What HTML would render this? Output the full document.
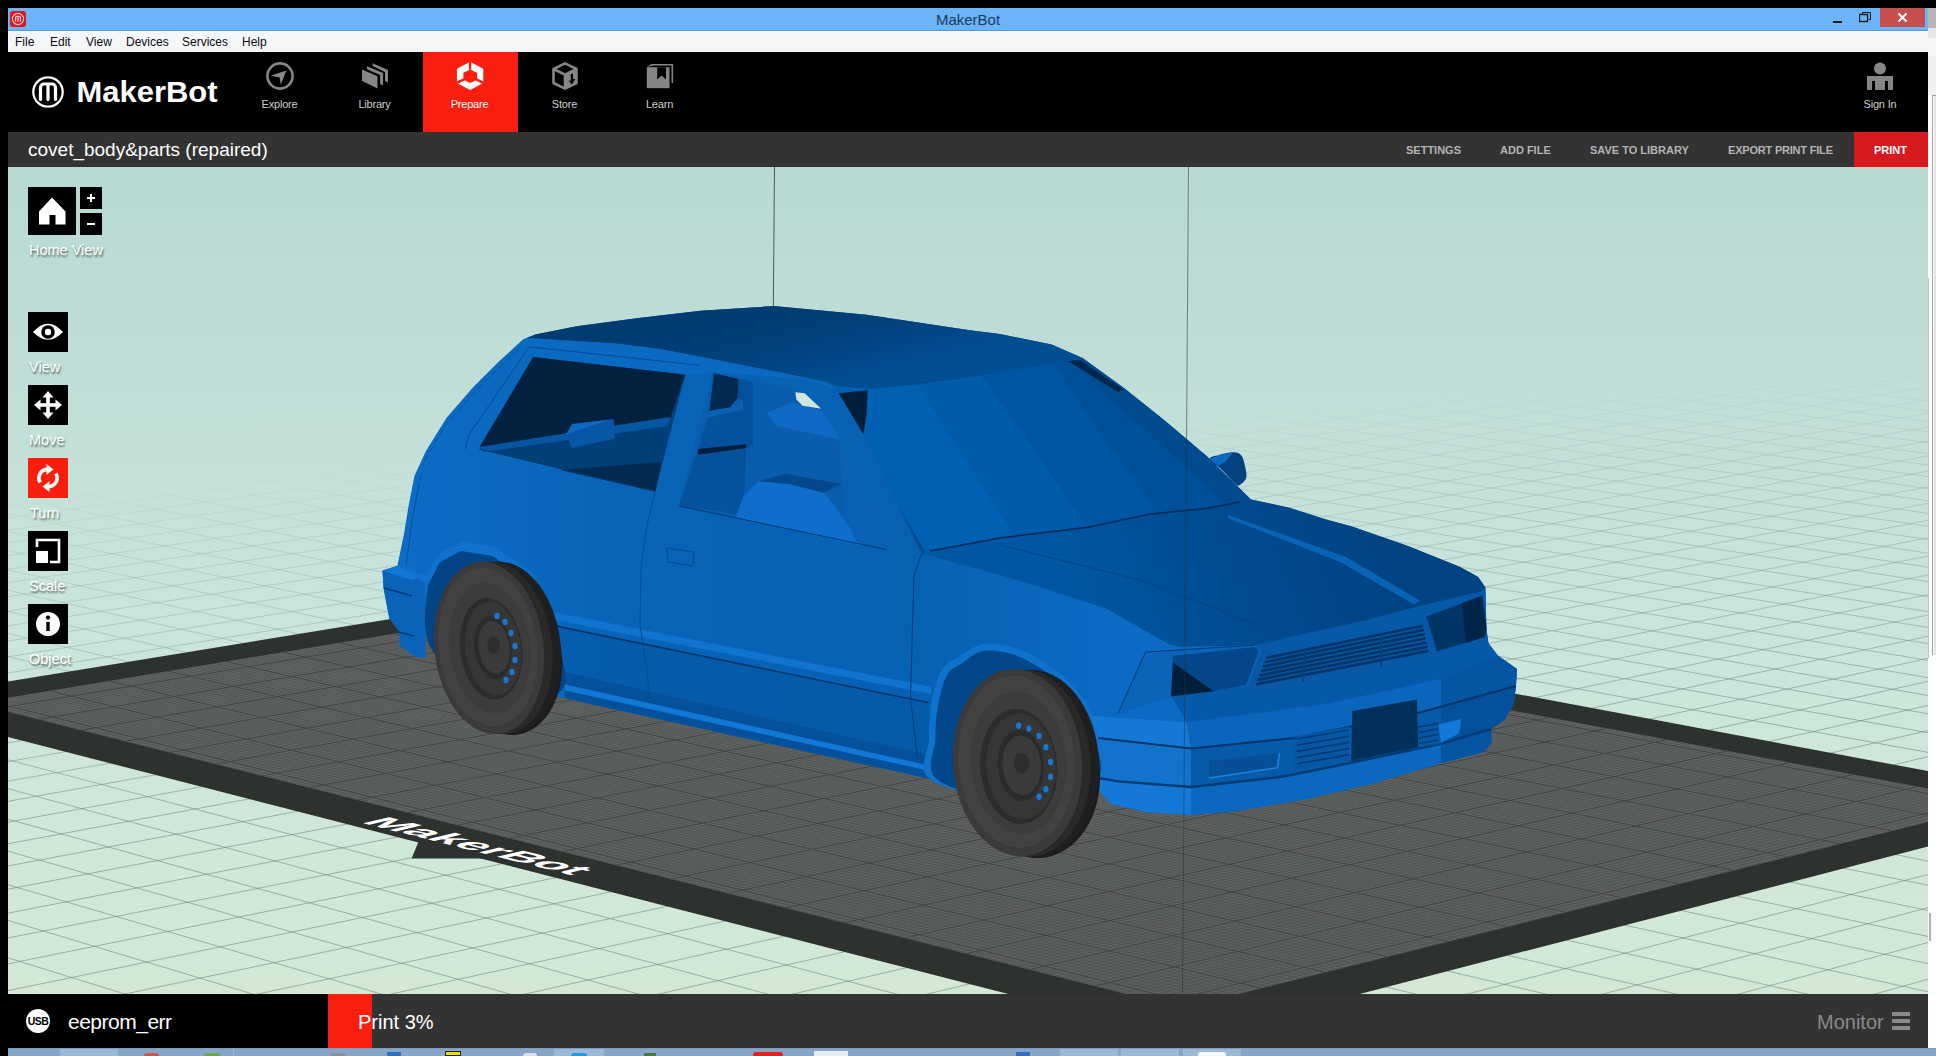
<!DOCTYPE html>
<html lang="en">
<head>
<meta charset="utf-8">
<title>MakerBot</title>
<style>
*{margin:0;padding:0;box-sizing:border-box}
html,body{width:1936px;height:1056px;overflow:hidden;background:#000}
body{position:relative;font-family:"Liberation Sans",sans-serif}
.abs{position:absolute}
#titlebar{left:8px;top:8px;width:1920px;height:23px;background:#6bb4f8;border-bottom:1px solid #5a9ad6}
#title{left:0;width:1920px;top:3px;text-align:center;font-size:15px;line-height:17px;color:#1d3a5c}
#menubar{left:8px;top:31px;width:1920px;height:21px;background:#f4f6f8}
#menubar span{position:absolute;top:4px;font-size:12px;line-height:15px;color:#0a0a14}
#navbar{left:8px;top:52px;width:1920px;height:80px;background:#000}
.tab{position:absolute;top:0;width:95px;height:80px;text-align:center;color:#cfcfcf;font-size:11px;letter-spacing:-0.2px}
.tab span{position:absolute;left:-1px;width:95px;top:45px;line-height:14px}
.tab svg{position:absolute;left:31px;top:8px}
#subbar{left:8px;top:132px;width:1920px;height:35px;background:#333}
#fname{left:20px;top:6px;font-size:19px;line-height:23px;color:#fff;white-space:nowrap}
.sb{position:absolute;top:12px;font-size:11px;line-height:13px;font-weight:bold;color:#b4b4b4;white-space:nowrap}
#statusbar{left:8px;top:994px;width:1920px;height:54px;background:#333}
#taskbar{left:8px;top:1048px;width:1928px;height:8px;background:#85a5c9;overflow:hidden}
#rstrip{left:1928px;top:8px;width:8px;height:1040px;background:#f0f0f0}
.tl{position:absolute;color:#fff;font-size:14.5px;line-height:17px;white-space:nowrap;text-shadow:1px 2px 2px rgba(0,0,0,.55)}
.tb{position:absolute;background:#000}
</style>
</head>
<body>
<!-- window title bar -->
<div id="titlebar" class="abs">
  <svg class="abs" style="left:2px;top:3px" width="16" height="16" viewBox="0 0 16 16"><rect width="16" height="16" rx="3" fill="#e0131f"/><circle cx="8" cy="8" r="5.6" fill="none" stroke="#f7c9cc" stroke-width="1.2"/><path d="M5.6 10.8V6.4a1 1 0 0 1 1-1h2.8a1 1 0 0 1 1 1v4.4M8 5.6v5.2" fill="none" stroke="#f7c9cc" stroke-width="1.3"/></svg>
  <div id="title" class="abs">MakerBot</div>
  <div class="abs" style="left:1825px;top:13px;width:9px;height:2px;background:#1a1a1a"></div>
  <svg class="abs" style="left:1851px;top:4px" width="12" height="11" viewBox="0 0 12 11"><path d="M3.5 2.5v-2h8v7h-2" fill="none" stroke="#1a1a1a" stroke-width="1"/><rect x="0.5" y="2.5" width="8" height="7" fill="none" stroke="#1a1a1a" stroke-width="1.4"/></svg>
  <div class="abs" style="left:1872px;top:0;width:45px;height:19px;background:#c7504f"></div>
  <svg class="abs" style="left:1889px;top:4px" width="11" height="11" viewBox="0 0 11 11"><path d="M1.5 1.5l8 8M9.5 1.5l-8 8" stroke="#fff" stroke-width="1.9"/></svg>
</div>
<!-- menu bar -->
<div id="menubar" class="abs">
  <span style="left:7px">File</span><span style="left:42px">Edit</span><span style="left:78px">View</span><span style="left:118px">Devices</span><span style="left:174px">Services</span><span style="left:234px">Help</span>
</div>
<!-- nav bar -->
<div id="navbar" class="abs">
  <svg class="abs" style="left:20px;top:20px" width="220" height="40" viewBox="28 72 220 40">
    <circle cx="48" cy="92" r="14.700" fill="none" stroke="#fff" stroke-width="2.200"/>
    <path d="M40.5 99.500V87.500a3.500 3.500 0 0 1 3.500-3.500h8a3.500 3.500 0 0 1 3.500 3.500V99.500M48 84.500V99.500" fill="none" stroke="#fff" stroke-width="3.200" stroke-linecap="round"/>
    <text x="76.500" y="102.200" font-family="Liberation Sans, sans-serif" font-weight="bold" font-size="29" fill="#fff" textLength="141" lengthAdjust="spacingAndGlyphs">MakerBot</text>
  </svg>
  <div class="tab" style="left:225px"><svg width="32" height="32" viewBox="0 0 32 32"><circle cx="16" cy="16" r="12.600" fill="none" stroke="#868686" stroke-width="2.600"/><path d="M22.400 10.600L6.900 15.600l8.700 1.800 1.200 7.400z" fill="#868686"/></svg><span>Explore</span></div>
  <div class="tab" style="left:320px"><svg width="32" height="32" viewBox="0 0 32 32"><path d="M13.600 3.200L29 10v12.400l-3-1.400V12L13.600 6.100zM8 6.300l16.100 6.800v12.400l-3-1.400V15L8 9.200zM3 9.400l15.500 6.800v12.400L3 21.100z" fill="#868686"/></svg><span>Library</span></div>
  <div class="tab" style="left:415px;background:#fa1e0e;color:#fff"><svg width="32" height="32" viewBox="0 0 32 32"><path d="M16.100 1.800L29.300 8.800v14.100L16.100 29.900 2.900 22.900V8.800z" fill="#fff"/><path d="M16.200 9.400l6.900 3.400v6.900l-6.900 3.400-6.800-3.400v-6.900z" fill="#fa1e0e"/><path d="M16.100 1.800v8M2.900 22.900l7-3.500M29.300 22.900l-7-3.500" stroke="#fa1e0e" stroke-width="2.400"/></svg><span>Prepare</span></div>
  <div class="tab" style="left:510px"><svg width="32" height="32" viewBox="0 0 32 32"><path d="M16 3.300L27.500 9v14L16 28.700 4.500 23V9zM4.500 9L16 14.700 27.500 9M16 14.700v14" fill="none" stroke="#868686" stroke-width="2.600" stroke-linejoin="round"/><path d="M16 14.700L27.500 9v14L16 28.700z" fill="#868686"/><path d="M21.800 14.500v6.200h-2.200l3.300 3.800 3.300-5.600h-2.200v-5.400z" fill="#000"/></svg><span>Store</span></div>
  <div class="tab" style="left:605px"><svg width="32" height="32" viewBox="0 0 32 32"><path d="M2.800 7.200L7.400 4H29.100v19.100h-1.600V5.600H9z" fill="#868686"/><path d="M2.800 7.200h22.700V28.200H2.800z" fill="#868686"/><path d="M13.200 7.200h8.700v12.300l-4.300-4-4.400 4z" fill="#000"/></svg><span>Learn</span></div>
  <div class="tab" style="left:1824px"><svg style="left:32px" width="32" height="32" viewBox="0 0 32 32"><circle cx="16" cy="8.500" r="6" fill="#868686"/><path d="M3 16h26v14h-5v-9h-3v9H11v-9H8v9H3z" fill="#868686"/></svg><span style="left:0.500px">Sign In</span></div>
</div>
<!-- sub bar -->
<div id="subbar" class="abs">
  <div id="fname" class="abs">covet_body&amp;parts (repaired)</div>
  <span class="sb" style="left:1398px">SETTINGS</span>
  <span class="sb" style="left:1492px">ADD FILE</span>
  <span class="sb" style="left:1582px">SAVE TO LIBRARY</span>
  <span class="sb" style="left:1720px;letter-spacing:-0.2px">EXPORT PRINT FILE</span>
  <div class="abs" style="left:1846px;top:0;width:74px;height:35px;background:#d71920"></div>
  <span class="sb" style="left:1866px;color:#fff">PRINT</span>
</div>
<!-- 3D viewport -->
<svg id="vp" class="abs" style="left:8px;top:167px" width="1920" height="827" viewBox="8 167 1920 827">
<defs>
<linearGradient id="bg" x1="0" y1="167" x2="0" y2="994" gradientUnits="userSpaceOnUse"><stop offset="0" stop-color="#b7d9d1"/><stop offset="0.3" stop-color="#c2dfd8"/><stop offset="0.55" stop-color="#cbe5dc"/><stop offset="1" stop-color="#d3e9d6"/></linearGradient>
<linearGradient id="fade" x1="1100" y1="415" x2="1122" y2="760" gradientUnits="userSpaceOnUse"><stop offset="0" stop-color="#fff" stop-opacity="0"/><stop offset="0.25" stop-color="#fff" stop-opacity="0.35"/><stop offset="1" stop-color="#fff" stop-opacity="1"/></linearGradient>
<mask id="fm" maskUnits="userSpaceOnUse" x="8" y="167" width="1920" height="827"><rect x="8" y="167" width="1920" height="827" fill="url(#fade)"/></mask>
<linearGradient id="gbed" x1="0" y1="580" x2="0" y2="994" gradientUnits="userSpaceOnUse"><stop offset="0" stop-color="#6a6d6c"/><stop offset="1" stop-color="#5d605f"/></linearGradient>
<clipPath id="bedclip"><polygon points="-25.7,703.2 1182.1,1008.2 2004.9,802.8 769.3,571.7"/></clipPath>
</defs>
<rect x="8" y="167" width="1920" height="827" fill="url(#bg)"/>
<g mask="url(#fm)"><path d="M-2997.4,382.2L2483.8,-86.9M-2997.4,388.0L2504.6,-86.0M-2997.4,394.0L2525.6,-85.1M-2997.4,400.0L2546.7,-84.2M-2997.5,406.1L2567.9,-83.3M-2997.5,412.3L2589.3,-82.4M-2997.5,418.6L2610.8,-81.4M-2997.5,425.0L2632.4,-80.5M-2997.5,431.5L2654.2,-79.6M-2997.5,438.0L2676.1,-78.6M-2997.5,444.8L2698.2,-77.7M-2997.5,451.6L2720.3,-76.8M-2997.5,458.5L2742.7,-75.8M-2997.5,465.5L2765.1,-74.8M-2997.5,472.7L2787.7,-73.9M-2997.5,480.0L2810.5,-72.9M-2997.5,487.4L2833.4,-71.9M-2997.5,494.9L2856.5,-70.9M-2997.5,502.6L2879.7,-69.9M-2997.5,510.4L2903.0,-68.9M-2997.5,518.3L2926.5,-67.9M-2997.5,526.4L2950.2,-66.9M-2997.5,534.6L2974.0,-65.9M-2997.5,543.0L2998.0,-64.9M-2997.6,551.5L3022.1,-63.8M-2997.6,560.2L3046.4,-62.8M-2997.6,569.0L3070.8,-61.7M-2997.6,578.0L3095.4,-60.7M-2997.6,587.2L3120.2,-59.6M-2997.6,596.5L3145.1,-58.5M-2997.6,606.0L3170.3,-57.5M-2997.6,615.8L3195.5,-56.4M-2997.6,625.7L3221.0,-55.3M-2997.6,635.8L3246.6,-54.2M-2997.6,646.1L3272.4,-53.1M-2997.6,656.6L3298.4,-52.0M-2997.6,667.3L3324.6,-50.9M-2997.6,678.3L3350.9,-49.7M-2997.7,689.5L3377.4,-48.6M-2997.7,700.9L3404.1,-47.5M-2997.7,712.5L3431.0,-46.3M-2997.7,724.5L3458.1,-45.1M-2997.7,736.6L3485.3,-44.0M-2997.7,749.1L3512.8,-42.8M-2997.7,761.8L3540.5,-41.6M-2997.7,774.8L3568.3,-40.4M-2997.7,788.1L3596.4,-39.2M-2997.7,801.7L3624.6,-38.0M-2997.7,815.7L3653.1,-36.8M-2997.7,829.9L3681.7,-35.6M-2997.8,844.5L3710.6,-34.3M-2997.8,859.5L3739.7,-33.1M-2997.8,874.8L3768.9,-31.8M-2997.8,890.5L3798.4,-30.6M-2997.8,906.6L3828.2,-29.3M-2997.8,923.1L3858.1,-28.0M-2997.8,940.1L3888.3,-26.7M-2997.8,957.4L3918.6,-25.4M-2997.9,975.3L3949.2,-24.1M-2997.9,993.6L3980.1,-22.8M-2997.9,1012.4L4011.1,-21.4M-2997.9,1031.7L4042.4,-20.1M-2997.9,1051.6L4074.0,-18.7M-2997.9,1072.0L4105.7,-17.4M-2997.9,1093.0L4137.8,-16.0M-2997.9,1114.7L4170.0,-14.6M-2998.0,1137.0L4202.5,-13.2M-2998.0,1159.9L4235.3,-11.8M-2998.0,1183.5L4268.3,-10.4M-2998.0,1207.9L4301.6,-9.0M-2998.0,1233.1L4335.1,-7.6M-2998.0,1259.0L4368.9,-6.1M-2998.1,1285.8L4402.9,-4.6M-2998.1,1313.5L4437.3,-3.2M-2998.1,1342.1L4471.9,-1.7M-2998.1,1371.6L4506.7,-0.2M-2998.1,1402.3L4541.9,1.3M-2998.2,1433.9L4577.3,2.8M-2998.2,1466.8L4613.0,4.4M-2998.2,1500.8L4649.0,5.9M-2998.2,1536.1L4685.3,7.5M-2998.3,1572.8L4721.9,9.0M-2998.3,1610.8L4758.8,10.6M-2998.3,1650.4L4796.0,12.2M-2998.3,1691.6L4833.5,13.8M-2998.4,1734.4L4871.3,15.4M-2998.4,1779.1L4909.4,17.1M-2998.4,1825.7L4947.8,18.7M-2998.5,1874.3L4986.6,20.4M-2998.5,1925.1L4999.7,28.2M-2998.5,1978.2L4999.9,39.5M-2998.6,2033.9L4998.9,51.7M-2998.6,2092.2L4999.1,64.1M-2998.7,2153.4L4999.3,77.2M-2998.7,2217.7L4999.5,90.9M-2998.8,2285.3L4999.7,105.3M-2998.8,2356.5L4999.9,120.5M-2998.9,2431.6L4998.7,136.9M-2998.9,2510.9L4998.9,153.9M-2999.0,2594.8L4999.1,171.8M-2999.0,2683.7L4999.4,190.7M-2999.1,2778.1L4999.6,210.9M-2999.2,2878.5L4999.9,232.3M-2999.3,2985.4L4998.5,255.6M-2694.7,2992.1L4998.7,280.0M-2388.4,2998.9L4999.0,306.1M-2045.6,2992.6L4999.3,334.0M-1736.8,2999.4L4999.6,364.0M-1393.9,2993.2L4999.9,396.4M-1082.6,3000.0L4998.1,432.3M-739.5,2993.7L4998.4,470.4M-397.1,2987.4L4998.7,511.8M-82.6,2994.2L4999.1,557.0M260.0,2987.9L4999.5,606.6M577.1,2994.7L4999.9,661.2M919.7,2988.4L4997.5,723.3M1239.3,2995.3L4997.9,790.8M1582.1,2988.9L4998.3,866.4M1904.3,2995.8L4998.8,951.7M2247.2,2989.4L4999.3,1048.7M2572.0,2996.3L4999.9,1159.8M2915.0,2990.0L4996.4,1292.1M3242.4,2996.8L4996.9,1443.6M3585.5,2990.5L4997.4,1623.6M3915.6,2997.4L4998.1,1841.1M4258.7,2991.0L4998.9,2109.1M4591.4,2997.9L5000.0,2447.6M4934.7,2991.5L4993.2,2900.9M-2999.7,2769.0L-2904.1,2999.0M-2997.5,2220.7L-2605.5,2998.5M-2996.0,1834.6L-2306.5,2998.0M-2999.8,1540.7L-2007.2,2997.5M-2998.4,1321.0L-1707.3,2997.0M-2997.2,1146.2L-1407.1,2996.5M-2999.9,1000.1L-1106.4,2996.0M-2998.8,882.4L-805.4,2995.5M-2997.9,783.1L-503.9,2994.9M-2999.9,695.9L-201.9,2994.4M-2999.0,622.8L100.4,2993.9M-2998.3,558.8L403.2,2993.4M-2999.9,501.0L706.4,2992.9M-2999.2,451.1L1010.0,2992.4M-2998.6,406.5L1314.1,2991.8M-2999.9,365.3L1618.6,2991.3M-2999.3,329.2L1923.5,2990.8M-2998.8,296.3L2228.9,2990.3M-2999.9,265.5L2534.6,2989.8M-2999.4,238.1L2840.9,2989.2M-2998.9,212.9L3147.5,2988.7M-3000.0,189.0L3454.6,2988.2M-2999.5,167.5L3762.1,2987.7M-2999.0,147.5L4070.1,2987.1M-3000.0,128.4L4378.5,2986.6M-2999.5,111.1L4687.3,2986.1M-2999.1,94.9L4996.6,2985.6M-3000.0,79.4L4991.4,2874.8M-2999.6,65.1L4986.4,2771.0M-2999.2,51.7L4981.8,2673.4M-3000.0,38.7L4977.4,2581.6M-2999.6,26.8L4973.3,2494.9M-2999.3,15.6L4969.4,2413.1M-3000.0,4.6L4965.8,2335.6M-2999.6,-5.5L4962.3,2262.3M-2999.3,-15.1L4959.0,2192.6M-3000.0,-24.5L4955.8,2126.4M-2999.7,-33.2L4999.0,2075.7M-2999.4,-41.5L4995.1,2015.1M-3000.0,-49.6L4991.3,1957.4M-2999.7,-57.2L4987.7,1902.2M-2999.4,-64.4L4984.2,1849.6M-3000.0,-71.5L4981.0,1799.2M-2999.7,-78.1L4977.8,1751.0M-2999.5,-84.5L4974.8,1704.8M-2982.1,-86.8L4971.9,1660.4M-2958.6,-87.8L4969.1,1617.9M-2935.1,-88.7L4966.4,1577.0M-2911.8,-89.6L4963.8,1537.7M-2888.6,-90.5L4997.3,1507.1M-2865.5,-91.4L4994.2,1470.4M-2842.6,-92.3L4991.3,1435.1M-2819.7,-93.3L4988.4,1401.0M-2796.9,-94.2L4985.7,1368.1M-2774.2,-95.0L4983.0,1336.3M-2751.7,-95.9L4980.5,1305.7M-2729.2,-96.8L4978.0,1276.0M-2706.8,-97.7L4975.6,1247.4M-2684.6,-98.6L4973.3,1219.6M-2662.4,-99.5L4971.1,1192.8M-2640.3,-100.3L4998.7,1171.7M-2618.4,-101.2L4996.1,1146.3M-2596.5,-102.1L4993.6,1121.8M-2574.7,-102.9L4991.2,1097.9M-2553.0,-103.8L4988.9,1074.7M-2531.5,-104.7L4986.6,1052.3M-2510.0,-105.5L4984.4,1030.4M-2488.6,-106.3L4982.2,1009.2M-2467.3,-107.2L4980.2,988.6M-2446.1,-108.0L4978.1,968.6M-2425.0,-108.9L4976.2,949.1M-2404.0,-109.7L4999.7,933.7M-2383.0,-110.5L4997.5,915.1M-2362.2,-111.3L4995.4,897.0M-2341.5,-112.2L4993.3,879.4M-2320.8,-113.0L4991.2,862.2M-2300.3,-113.8L4989.2,845.5M-2279.8,-114.6L4987.3,829.2M-2259.4,-115.4L4985.4,813.3M-2239.1,-116.2L4983.5,797.7M-2218.9,-117.0L4981.7,782.6M-2198.8,-117.8L4979.9,767.8M-2178.7,-118.6L4978.2,753.3M-2158.8,-119.4L4998.6,741.8M-2138.9,-120.2L4996.6,728.0M-2119.1,-121.0L4994.8,714.4M-2099.4,-121.7L4993.0,701.2M-2079.8,-122.5L4991.2,688.2M-2060.3,-123.3L4989.5,675.6M-2040.8,-124.1L4987.8,663.2M-2021.4,-124.8L4986.1,651.1M-2002.2,-125.6L4984.5,639.2M-1983.0,-126.3L4982.9,627.6M-1963.8,-127.1L4981.3,616.2M-1944.8,-127.9L4999.4,607.1M-1925.8,-128.6L4997.7,596.2M-1906.9,-129.4L4996.0,585.4M-1888.1,-130.1L4994.4,574.9M-1869.4,-130.8L4992.8,564.6M-1850.7,-131.6L4991.2,554.5M-1832.1,-132.3L4989.6,544.6M-1813.6,-133.0L4988.1,534.9M-1795.2,-133.8L4986.7,525.3M-1776.8,-134.5L4985.2,516.0M-1758.6,-135.2L4983.8,506.8M-1740.4,-135.9L5000.0,499.4M-1722.2,-136.7L4998.5,490.6M-1704.2,-137.4L4997.0,481.8M-1686.2,-138.1L4995.5,473.3M-1668.3,-138.8L4994.0,464.9M-1650.5,-139.5L4992.6,456.6M-1632.7,-140.2L4991.2,448.5M-1615.0,-140.9L4989.8,440.5M-1597.4,-141.6L4988.4,432.7M-1579.8,-142.3L4987.1,425.0M-1562.3,-143.0L4985.8,417.4M-1544.9,-143.7L4984.5,410.0M-1527.6,-144.4L4999.1,404.0M-1510.3,-145.0L4997.7,396.8M-1493.1,-145.7L4996.4,389.7M-1476.0,-146.4L4995.0,382.7M-1458.9,-147.1L4993.7,375.8M-1441.9,-147.8L4992.4,369.1M-1424.9,-148.4L4991.2,362.4M-1408.1,-149.1L4989.9,355.9M-1391.3,-149.8L4988.7,349.4M-1374.5,-150.4L4987.5,343.1M-1357.8,-151.1L4986.3,336.8M-1341.2,-151.7L4999.7,331.8M-1324.7,-152.4L4998.4,325.7M-1308.2,-153.0L4997.1,319.7M-1291.8,-153.7L4995.9,313.8M-1275.4,-154.3L4994.7,308.0M-1259.2,-155.0L4993.5,302.3M-1242.9,-155.6L4992.3,296.7M-1226.8,-156.3L4991.2,291.1M-1210.7,-156.9L4990.0,285.7M-1194.6,-157.5L4988.9,280.3M-1178.6,-158.2L4987.8,274.9M-1162.7,-158.8L4986.7,269.7M-1146.9,-159.4L4999.0,265.5M-1131.1,-160.0L4997.8,260.3M-1115.3,-160.7L4996.7,255.3M-1099.6,-161.3L4995.5,250.3M-1084.0,-161.9L4994.4,245.4M-1068.5,-162.5L4993.3,240.6M-1053.0,-163.1L4992.2,235.8M-1037.5,-163.7L4991.2,231.1M-1022.1,-164.4L4990.1,226.5M-1006.8,-165.0L4989.1,221.9M-991.5,-165.6L4988.0,217.4M-976.3,-166.2L4999.4,213.7M-961.1,-166.8L4998.4,209.3M-946.0,-167.4L4997.3,204.9M-931.0,-168.0L4996.2,200.6M-916.0,-168.6L4995.2,196.4M-901.1,-169.1L4994.2,192.2M-886.2,-169.7L4993.2,188.0M-871.4,-170.3L4992.1,183.9" fill="none" stroke="#5f7a72" stroke-opacity="0.5" stroke-width="1"/></g>
<path d="M774.5 167L773.2 320" stroke="#4a5a58" stroke-width="1"/>
<polygon points="-124.4,703.0 1185.0,1039.4 2096.6,802.7 779.1,555.7" fill="#2d322f" />
<polygon points="-25.7,703.2 1182.1,1008.2 2004.9,802.8 769.3,571.7" fill="url(#gbed)" />
<path d="M-24.5,703.5L770.6,571.9M-20.3,704.5L775.0,572.7M-16.2,705.6L779.4,573.5M-12.0,706.6L783.7,574.4M-7.9,707.7L788.1,575.2M0.4,709.8L796.9,576.8M4.6,710.8L801.3,577.6M8.8,711.9L805.7,578.5M13.0,713.0L810.1,579.3M17.2,714.0L814.6,580.1M21.4,715.1L819.0,581.0M25.6,716.2L823.4,581.8M29.9,717.2L827.9,582.6M34.1,718.3L832.3,583.5M42.6,720.4L841.3,585.1M46.9,721.5L845.7,586.0M51.1,722.6L850.2,586.8M55.4,723.7L854.7,587.6M59.7,724.8L859.2,588.5M64.0,725.8L863.7,589.3M68.3,726.9L868.3,590.2M72.6,728.0L872.8,591.0M76.9,729.1L877.3,591.9M85.6,731.3L886.4,593.6M89.9,732.4L891.0,594.4M94.3,733.5L895.5,595.3M98.7,734.6L900.1,596.1M103.0,735.7L904.7,597.0M107.4,736.8L909.3,597.8M111.8,737.9L913.9,598.7M116.2,739.0L918.5,599.6M120.6,740.1L923.1,600.4M129.5,742.4L932.3,602.2M133.9,743.5L937.0,603.0M138.3,744.6L941.6,603.9M142.8,745.7L946.3,604.8M147.2,746.9L950.9,605.6M151.7,748.0L955.6,606.5M156.2,749.1L960.3,607.4M160.7,750.3L965.0,608.3M165.2,751.4L969.7,609.1M174.2,753.7L979.1,610.9M178.7,754.8L983.8,611.8M183.2,755.9L988.6,612.7M187.8,757.1L993.3,613.6M192.3,758.2L998.0,614.4M196.9,759.4L1002.8,615.3M201.5,760.6L1007.6,616.2M206.0,761.7L1012.3,617.1M210.6,762.9L1017.1,618.0M219.8,765.2L1026.7,619.8M224.4,766.4L1031.5,620.7M229.1,767.5L1036.3,621.6M233.7,768.7L1041.2,622.5M238.4,769.9L1046.0,623.4M243.0,771.0L1050.8,624.3M247.7,772.2L1055.7,625.2M252.3,773.4L1060.5,626.1M257.0,774.6L1065.4,627.0M266.4,777.0L1075.2,628.9M271.1,778.1L1080.1,629.8M275.8,779.3L1085.0,630.7M280.6,780.5L1089.9,631.6M285.3,781.7L1094.8,632.5M290.1,782.9L1099.7,633.5M294.8,784.1L1104.7,634.4M299.6,785.3L1109.6,635.3M304.4,786.5L1114.6,636.2M314.0,789.0L1124.5,638.1M318.8,790.2L1129.5,639.0M323.6,791.4L1134.5,640.0M328.4,792.6L1139.5,640.9M333.3,793.8L1144.5,641.8M338.1,795.1L1149.6,642.8M343.0,796.3L1154.6,643.7M347.9,797.5L1159.6,644.7M352.7,798.7L1164.7,645.6M362.5,801.2L1174.8,647.5M367.4,802.5L1179.9,648.5M372.4,803.7L1185.0,649.4M377.3,804.9L1190.1,650.4M382.2,806.2L1195.2,651.3M387.2,807.4L1200.3,652.3M392.1,808.7L1205.4,653.2M397.1,810.0L1210.5,654.2M402.1,811.2L1215.7,655.2M412.1,813.7L1226.0,657.1M417.1,815.0L1231.2,658.1M422.2,816.3L1236.4,659.0M427.2,817.5L1241.6,660.0M432.2,818.8L1246.8,661.0M437.3,820.1L1252.0,661.9M442.4,821.4L1257.2,662.9M447.4,822.7L1262.4,663.9M452.5,824.0L1267.7,664.9M462.8,826.5L1278.2,666.8M467.9,827.8L1283.5,667.8M473.0,829.1L1288.7,668.8M478.2,830.4L1294.0,669.8M483.3,831.7L1299.3,670.8M488.5,833.0L1304.6,671.8M493.7,834.3L1310.0,672.8M498.9,835.6L1315.3,673.8M504.1,837.0L1320.6,674.8M514.5,839.6L1331.4,676.8M519.7,840.9L1336.7,677.8M525.0,842.2L1342.1,678.8M530.2,843.6L1347.5,679.8M535.5,844.9L1352.9,680.8M540.8,846.2L1358.3,681.8M546.1,847.6L1363.7,682.9M551.4,848.9L1369.2,683.9M556.7,850.3L1374.6,684.9M567.4,853.0L1385.5,686.9M572.7,854.3L1391.0,688.0M578.1,855.7L1396.5,689.0M583.5,857.0L1402.0,690.0M588.9,858.4L1407.5,691.0M594.3,859.7L1413.0,692.1M599.7,861.1L1418.6,693.1M605.1,862.5L1424.1,694.1M610.5,863.8L1429.7,695.2M621.4,866.6L1440.8,697.3M626.9,868.0L1446.4,698.3M632.4,869.4L1452.0,699.4M637.9,870.8L1457.6,700.4M643.4,872.1L1463.2,701.5M648.9,873.5L1468.8,702.5M654.5,874.9L1474.4,703.6M660.0,876.3L1480.1,704.6M665.6,877.7L1485.8,705.7M676.7,880.6L1497.1,707.8M682.3,882.0L1502.8,708.9M687.9,883.4L1508.5,709.9M693.5,884.8L1514.2,711.0M699.2,886.2L1520.0,712.1M704.8,887.7L1525.7,713.1M710.5,889.1L1531.4,714.2M716.1,890.5L1537.2,715.3M721.8,891.9L1543.0,716.4M733.2,894.8L1554.5,718.5M739.0,896.3L1560.4,719.6M744.7,897.7L1566.2,720.7M750.4,899.2L1572.0,721.8M756.2,900.6L1577.8,722.9M762.0,902.1L1583.7,724.0M767.8,903.5L1589.6,725.1M773.6,905.0L1595.4,726.2M779.4,906.5L1601.3,727.3M791.1,909.4L1613.1,729.5M796.9,910.9L1619.1,730.6M802.8,912.4L1625.0,731.7M808.7,913.9L1630.9,732.8M814.6,915.4L1636.9,733.9M820.5,916.9L1642.9,735.1M826.4,918.3L1648.9,736.2M832.3,919.8L1654.9,737.3M838.3,921.4L1660.9,738.4M850.2,924.4L1672.9,740.7M856.2,925.9L1679.0,741.8M862.2,927.4L1685.0,742.9M868.2,928.9L1691.1,744.1M874.3,930.4L1697.2,745.2M880.3,932.0L1703.2,746.4M886.4,933.5L1709.4,747.5M892.5,935.0L1715.5,748.6M898.5,936.6L1721.6,749.8M910.8,939.7L1733.9,752.1M916.9,941.2L1740.1,753.2M923.0,942.8L1746.2,754.4M929.2,944.3L1752.4,755.6M935.4,945.9L1758.6,756.7M941.6,947.4L1764.9,757.9M947.8,949.0L1771.1,759.0M954.0,950.6L1777.3,760.2M960.2,952.1L1783.6,761.4M972.8,955.3L1796.1,763.7M979.0,956.9L1802.4,764.9M985.3,958.5L1808.7,766.1M991.6,960.1L1815.1,767.3M998.0,961.7L1821.4,768.5M1004.3,963.3L1827.8,769.6M1010.7,964.9L1834.1,770.8M1017.0,966.5L1840.5,772.0M1023.4,968.1L1846.9,773.2M1036.2,971.3L1859.7,775.6M1042.7,973.0L1866.1,776.8M1049.1,974.6L1872.6,778.0M1055.6,976.2L1879.0,779.2M1062.1,977.9L1885.5,780.4M1068.5,979.5L1892.0,781.7M1075.1,981.1L1898.5,782.9M1081.6,982.8L1905.0,784.1M1088.1,984.4L1911.5,785.3M1101.3,987.8L1924.6,787.8M1107.8,989.4L1931.1,789.0M1114.5,991.1L1937.7,790.2M1121.1,992.8L1944.3,791.4M1127.7,994.4L1950.9,792.7M1134.4,996.1L1957.5,793.9M1141.0,997.8L1964.2,795.2M1147.7,999.5L1970.8,796.4M1154.4,1001.2L1977.5,797.7M1167.9,1004.6L1990.8,800.2M1174.6,1006.3L1997.5,801.4M1181.4,1008.0L2004.2,802.7M-24.1,702.9L1183.9,1007.7M-17.9,701.9L1190.5,1006.1M-5.6,699.8L1203.6,1002.8M0.5,698.8L1210.1,1001.2M6.7,697.8L1216.7,999.6M12.8,696.8L1223.2,997.9M18.9,695.8L1229.7,996.3M25.0,694.8L1236.1,994.7M31.1,693.8L1242.6,993.1M37.1,692.8L1249.0,991.5M43.2,691.8L1255.5,989.9M55.3,689.8L1268.3,986.7M61.3,688.8L1274.7,985.1M67.4,687.8L1281.1,983.5M73.4,686.8L1287.5,981.9M79.4,685.8L1293.8,980.3M85.4,684.8L1300.2,978.7M91.3,683.8L1306.5,977.1M97.3,682.8L1312.8,975.6M103.3,681.8L1319.1,974.0M115.2,679.9L1331.6,970.8M121.1,678.9L1337.9,969.3M127.0,677.9L1344.2,967.7M132.9,676.9L1350.4,966.2M138.8,676.0L1356.6,964.6M144.7,675.0L1362.8,963.1M150.6,674.0L1369.0,961.5M156.5,673.0L1375.2,960.0M162.3,672.1L1381.3,958.4M174.0,670.1L1393.6,955.4M179.9,669.2L1399.8,953.8M185.7,668.2L1405.9,952.3M191.5,667.2L1412.0,950.8M197.3,666.3L1418.1,949.3M203.1,665.3L1424.1,947.8M208.9,664.4L1430.2,946.2M214.6,663.4L1436.3,944.7M220.4,662.5L1442.3,943.2M231.9,660.6L1454.3,940.2M237.7,659.6L1460.3,938.7M243.4,658.7L1466.3,937.2M249.1,657.7L1472.3,935.7M254.8,656.8L1478.2,934.3M260.5,655.8L1484.2,932.8M266.2,654.9L1490.1,931.3M271.9,653.9L1496.1,929.8M277.5,653.0L1502.0,928.3M288.9,651.1L1513.8,925.4M294.5,650.2L1519.6,923.9M300.1,649.3L1525.5,922.5M305.8,648.3L1531.3,921.0M311.4,647.4L1537.2,919.5M317.0,646.5L1543.0,918.1M322.6,645.6L1548.8,916.6M328.2,644.6L1554.6,915.2M333.7,643.7L1560.4,913.7M344.9,641.9L1572.0,910.9M350.4,641.0L1577.7,909.4M356.0,640.0L1583.5,908.0M361.5,639.1L1589.2,906.6M367.0,638.2L1594.9,905.1M372.5,637.3L1600.6,903.7M378.0,636.4L1606.3,902.3M383.5,635.5L1612.0,900.9M389.0,634.6L1617.7,899.5M400.0,632.8L1629.0,896.6M405.4,631.9L1634.6,895.2M410.9,630.9L1640.3,893.8M416.3,630.0L1645.9,892.4M421.8,629.1L1651.5,891.0M427.2,628.3L1657.1,889.6M432.6,627.4L1662.7,888.2M438.0,626.5L1668.2,886.8M443.4,625.6L1673.8,885.5M454.2,623.8L1684.9,882.7M459.6,622.9L1690.4,881.3M465.0,622.0L1695.9,879.9M470.3,621.1L1701.4,878.6M475.7,620.2L1706.9,877.2M481.0,619.4L1712.4,875.8M486.3,618.5L1717.9,874.5M491.7,617.6L1723.3,873.1M497.0,616.7L1728.8,871.7M507.6,615.0L1739.6,869.0M512.9,614.1L1745.0,867.7M518.2,613.2L1750.5,866.3M523.4,612.3L1755.8,865.0M528.7,611.5L1761.2,863.6M534.0,610.6L1766.6,862.3M539.2,609.7L1772.0,860.9M544.4,608.9L1777.3,859.6M549.7,608.0L1782.7,858.3M560.1,606.3L1793.3,855.6M565.3,605.4L1798.6,854.3M570.5,604.5L1803.9,853.0M575.7,603.7L1809.2,851.6M580.9,602.8L1814.5,850.3M586.1,602.0L1819.8,849.0M591.2,601.1L1825.0,847.7M596.4,600.3L1830.3,846.4M601.6,599.4L1835.5,845.1M611.8,597.7L1845.9,842.5M617.0,596.9L1851.2,841.2M622.1,596.0L1856.3,839.9M627.2,595.2L1861.5,838.6M632.3,594.3L1866.7,837.3M637.4,593.5L1871.9,836.0M642.5,592.6L1877.0,834.7M647.5,591.8L1882.2,833.4M652.6,591.0L1887.3,832.2M662.7,589.3L1897.6,829.6M667.8,588.5L1902.7,828.3M672.8,587.6L1907.8,827.1M677.9,586.8L1912.8,825.8M682.9,586.0L1917.9,824.5M687.9,585.1L1923.0,823.2M692.9,584.3L1928.1,822.0M697.9,583.5L1933.1,820.7M702.9,582.6L1938.1,819.5M712.9,581.0L1948.2,817.0M717.8,580.2L1953.2,815.7M722.8,579.4L1958.2,814.5M727.7,578.5L1963.2,813.2M732.7,577.7L1968.2,812.0M737.6,576.9L1973.1,810.7M742.6,576.1L1978.1,809.5M747.5,575.3L1983.0,808.3M752.4,574.5L1988.0,807.0M762.2,572.8L1997.8,804.6M767.1,572.0L2002.8,803.3" fill="none" stroke="#3c3f3e" stroke-opacity="0.4" stroke-width="0.7"/>
<path d="M-3.7,708.7L792.5,576.0M38.4,719.4L836.8,584.3M81.3,730.2L881.9,592.7M125.0,741.3L927.7,601.3M169.7,752.5L974.4,610.0M215.2,764.0L1021.9,618.9M261.7,775.8L1070.3,628.0M309.2,787.7L1119.6,637.2M357.6,800.0L1169.7,646.6M407.1,812.5L1220.8,656.1M457.6,825.2L1272.9,665.9M509.3,838.3L1326.0,675.8M562.0,851.6L1380.1,685.9M616.0,865.2L1435.2,696.2M671.1,879.1L1491.4,706.7M727.5,893.4L1548.8,717.5M785.2,908.0L1607.2,728.4M844.2,922.9L1666.9,739.6M904.6,938.1L1727.7,750.9M966.5,953.7L1789.9,762.6M1029.8,969.7L1853.3,774.4M1094.7,986.1L1918.0,786.5M1161.1,1002.9L1984.1,798.9M-11.7,700.9L1197.0,1004.4M49.3,690.8L1261.9,988.3M109.2,680.9L1325.4,972.4M168.2,671.1L1387.5,956.9M226.2,661.5L1448.3,941.7M283.2,652.1L1507.9,926.9M339.3,642.8L1566.2,912.3M394.5,633.7L1623.3,898.0M448.8,624.7L1679.3,884.1M502.3,615.8L1734.2,870.4M554.9,607.1L1788.0,856.9M606.7,598.6L1840.7,843.8M657.7,590.1L1892.4,830.9M707.9,581.8L1943.2,818.2M757.3,573.6L1992.9,805.8" fill="none" stroke="#404342" stroke-width="1"/>
<polygon points="418.8,841 411.6,858.6 484.6,858.4" fill="#2d322f"/>
<text transform="matrix(1.648 0.4125 -1.348 0.3186 360.2 822.4)" x="0" y="0" font-family="Liberation Sans, sans-serif" font-weight="bold" font-size="28" fill="#fff" textLength="128" lengthAdjust="spacingAndGlyphs">MakerBot</text>
<defs>
<linearGradient id="gside" x1="400" y1="0" x2="1100" y2="0" gradientUnits="userSpaceOnUse"><stop offset="0" stop-color="#0c6cc6"/><stop offset="0.3" stop-color="#0864b8"/><stop offset="0.75" stop-color="#0661b3"/><stop offset="1" stop-color="#0a6ac4"/></linearGradient>
<linearGradient id="groof" x1="780" y1="306" x2="800" y2="390" gradientUnits="userSpaceOnUse"><stop offset="0" stop-color="#003b72"/><stop offset="0.6" stop-color="#004381"/><stop offset="1" stop-color="#004e92"/></linearGradient>
<linearGradient id="ghood" x1="1380" y1="520" x2="1080" y2="640" gradientUnits="userSpaceOnUse"><stop offset="0" stop-color="#004381"/><stop offset="0.5" stop-color="#004c91"/><stop offset="1" stop-color="#0056a2"/></linearGradient>
<linearGradient id="gtyre" x1="0" y1="0" x2="1" y2="1"><stop offset="0" stop-color="#4a4a4a"/><stop offset="1" stop-color="#333"/></linearGradient>
</defs>
<polygon points="425.7,634.0 425.7,658.0 415.5,656.8 399.5,645.5 399.5,631.8 389.3,618.2 383.6,588.6 382.5,570.5 397.3,566.0 404.0,534.0 408.2,508.0 414.4,476.0 425.8,451.2 446.4,418.1 473.3,387.1 498.1,362.3 522.9,339.6 535.3,334.4 576.6,326.2 638.6,317.9 700.6,310.7 773.6,306.1 866.6,314.8 969.9,330.3 1000.0,334.1 1051.7,344.5 1082.6,357.9 1124.0,387.9 1165.3,420.9 1206.6,456.0 1251.0,499.4 1289.3,507.7 1325.3,519.3 1351.2,526.3 1408.0,546.1 1459.6,566.8 1478.2,577.1 1485.4,587.4 1486.4,628.8 1488.5,643.2 1497.8,655.6 1517.0,668.9 1515.9,685.9 1513.6,704.1 1504.5,720.0 1490.9,729.1 1492.0,742.7 1484.1,751.8 1440.9,763.2 1372.7,783.6 1304.5,799.5 1236.4,810.9 1190.9,815.0 1145.5,812.0 1111.4,804.1 1098.0,790.0 946.8,784.5 935.5,780.0 565.0,698.2 520.0,690.0" fill="url(#gside)" />
<polygon points="835.6,386.0 868.8,388.8 950.2,377.2 1052.4,363.2 1066.4,360.9 1082.6,357.9 1124.0,387.9 1165.3,420.9 1206.6,456.0 1251.0,499.4 1206.6,507.3 1150.8,512.9 1086.8,526.3 1000.0,536.6 921.6,553.5 899.7,508.0 866.6,438.8" fill="#004a8e" />
<polygon points="835.6,386.0 868.8,388.8 917.6,384.2 1021.9,546.6 928.2,556.4 899.7,508.0 866.6,438.8" fill="#0061b4" />
<polygon points="917.6,384.2 982.7,374.9 1091.9,532.6 1021.9,546.6" fill="#005bab" />
<polygon points="982.7,374.9 1052.4,363.2 1161.6,518.5 1091.9,532.6" fill="#0055a2" />
<polygon points="1052.4,363.2 1066.4,360.9 1075.7,365.6 1229.7,507.7 1161.6,518.5" fill="#005099" />
<polygon points="522.9,339.6 535.3,334.4 576.6,326.2 638.6,317.9 700.6,310.7 773.6,306.1 866.6,314.8 969.9,330.3 1000.0,334.1 1051.7,344.5 1082.6,357.9 1066.4,360.9 1052.4,363.2 950.2,377.2 868.8,388.8 835.6,386.0 825.3,381.9 775.7,371.6 701.3,357.1 660.0,348.9 618.0,343.7 527.0,338.0" fill="url(#groof)" />
<polygon points="1068.0,361.0 1080.0,360.0 1124.0,390.0 1118.0,392.0" fill="#01284c" />
<polygon points="838.7,393.3 867.6,390.2 866.6,414.0 863.5,434.6" fill="#011f3b" />
<polygon points="921.6,553.5 1000.0,536.6 1086.8,526.3 1150.8,512.9 1206.6,507.3 1251.0,499.4 1289.3,507.7 1325.3,519.3 1351.2,526.3 1408.0,546.1 1459.6,566.8 1478.2,577.1 1485.4,587.4 1482.3,591.6 1420.3,606.0 1366.6,620.5 1304.6,633.9 1257.0,645.3 1180.0,647.0 1168.6,644.0 1106.6,608.8 1024.0,582.0" fill="url(#ghood)" />
<polygon points="1228.0,515.0 1346.0,557.0 1420.0,600.5 1414.0,604.5 1340.0,562.0 1228.0,518.0" fill="#0a6cc4" opacity='0.8'/>
<polyline points="1000.0,545.0 1140.0,580.0 1259.8,625.5" fill="none" stroke="#033f7c" stroke-width="0.8" />
<polyline points="930.0,551.0 1000.0,538.0 1086.8,527.5 1150.8,514.0 1206.6,508.5 1240.0,502.0" fill="none" stroke="#012a52" stroke-width="1.6" />
<polygon points="1257.0,645.3 1304.6,633.9 1366.6,620.5 1420.3,606.0 1482.3,591.6 1485.4,587.4 1486.4,628.8 1488.5,643.2 1497.8,655.6 1441.0,679.0 1327.0,704.0 1186.4,722.3 1172.0,697.0 1172.8,658.9 1180.0,650.0" fill="#0559a8" />
<polygon points="1426.5,616.4 1482.3,595.7 1486.4,628.8 1484.4,637.0 1436.9,651.5" fill="#013566" />
<polygon points="1462.0,603.0 1482.3,595.7 1486.4,628.8 1484.4,637.0 1466.0,643.0" fill="#012549" />
<polygon points="1263.3,653.6 1425.5,622.6 1435.8,649.4 1428.6,657.7 1257.0,693.8 1251.0,684.5" fill="#0858a6" />
<polyline points="1266.4,657.8 1423.0,625.7" fill="none" stroke="#023468" stroke-width="2.7" />
<polyline points="1264.7,662.2 1423.9,629.9" fill="none" stroke="#023468" stroke-width="2.7" />
<polyline points="1262.9,666.6 1424.8,634.1" fill="none" stroke="#023468" stroke-width="2.7" />
<polyline points="1261.2,671.0 1425.8,638.3" fill="none" stroke="#023468" stroke-width="2.7" />
<polyline points="1259.4,675.5 1426.7,642.5" fill="none" stroke="#023468" stroke-width="2.7" />
<polyline points="1257.6,679.9 1427.6,646.7" fill="none" stroke="#023468" stroke-width="2.7" />
<polyline points="1255.9,684.3 1428.5,650.9" fill="none" stroke="#023468" stroke-width="2.7" />
<polyline points="1305.0,648.0 1303.0,682.0" fill="none" stroke="#03427f" stroke-width="2" />
<polyline points="1382.0,633.0 1381.0,667.0" fill="none" stroke="#03427f" stroke-width="2" />
<polygon points="1145.5,652.0 1254.6,645.2 1261.4,650.3 1247.8,686.1 1172.8,696.4 1118.0,713.4" fill="#0a63b8" />
<polygon points="1172.8,656.0 1254.6,647.0 1259.0,651.0 1246.0,685.0 1213.7,691.3 1172.8,662.3" fill="#03468a" />
<polygon points="1172.8,662.3 1213.7,691.3 1171.0,696.4" fill="#011f3b" />
<polyline points="1118.0,713.4 1145.5,652.0 1254.6,645.2" fill="none" stroke="#023a73" stroke-width="1" />
<polygon points="1084.5,715.5 1100.0,717.7 1186.4,722.3 1327.0,704.0 1441.0,679.0 1497.8,655.6 1517.0,668.9 1516.0,686.0 1418.0,713.0 1295.0,738.0 1190.9,748.4 1100.0,738.2 1090.0,738.0" fill="#0a66bd" />
<polygon points="1090.0,738.0 1100.0,738.2 1190.9,748.4 1295.0,738.0 1418.0,713.0 1516.0,686.0 1513.6,704.1 1504.5,720.0 1491.0,729.0 1491.0,729.0 1441.0,743.9 1350.0,763.0 1282.0,776.8 1191.0,787.0 1118.0,781.4 1098.0,778.0" fill="#075aaa" />
<polygon points="1098.0,778.0 1118.0,781.4 1191.0,787.0 1282.0,776.8 1350.0,763.0 1441.0,743.9 1491.0,729.0 1490.9,729.1 1492.0,742.7 1484.1,751.8 1440.9,763.2 1372.7,783.6 1304.5,799.5 1236.4,810.9 1190.9,815.0 1145.5,812.0 1111.4,804.1 1098.0,790.0" fill="#0a68c0" />
<polygon points="1084.5,715.5 1186.4,722.3 1190.9,748.4 1191.0,787.0 1190.9,815.0 1145.5,812.0 1111.4,804.1 1098.0,790.0" fill="#1a84e4" opacity='0.6'/>
<polygon points="1441.0,679.0 1497.8,655.6 1517.0,668.9 1515.9,685.9 1513.6,704.1 1504.5,720.0 1490.9,729.1 1492.0,742.7 1484.1,751.8 1440.9,763.2" fill="#034a90" opacity='0.6'/>
<polyline points="1090.0,738.0 1100.0,738.2 1190.9,748.4 1295.0,738.0 1418.0,713.0 1516.0,686.0" fill="none" stroke="#023468" stroke-width="2" />
<polyline points="1098.0,778.0 1118.0,781.4 1191.0,787.0 1282.0,776.8 1350.0,763.0 1441.0,743.9 1491.0,729.0" fill="none" stroke="#023a73" stroke-width="2.4" />
<polygon points="1352.3,710.9 1417.0,699.5 1418.2,747.3 1351.1,760.9" fill="#01305c" />
<polygon points="1295.5,735.9 1350.0,726.8 1350.0,760.9 1293.2,770.0" fill="#0557a4" />
<polyline points="1297.0,739.0 1349.0,730.0" fill="none" stroke="#023a73" stroke-width="1.6" />
<polyline points="1297.0,745.2 1349.0,736.2" fill="none" stroke="#023a73" stroke-width="1.6" />
<polyline points="1297.0,751.4 1349.0,742.4" fill="none" stroke="#023a73" stroke-width="1.6" />
<polyline points="1297.0,757.6 1349.0,748.6" fill="none" stroke="#023a73" stroke-width="1.6" />
<polyline points="1297.0,763.8 1349.0,754.8" fill="none" stroke="#023a73" stroke-width="1.6" />
<polygon points="1418.2,724.5 1438.6,721.1 1438.6,743.9 1418.2,747.3" fill="#0557a4" />
<polyline points="1419.0,727.0 1438.0,723.6" fill="none" stroke="#023a73" stroke-width="1.5" />
<polyline points="1419.0,732.5 1438.0,729.1" fill="none" stroke="#023a73" stroke-width="1.5" />
<polyline points="1419.0,738.0 1438.0,734.6" fill="none" stroke="#023a73" stroke-width="1.5" />
<polyline points="1419.0,743.5 1438.0,740.1" fill="none" stroke="#023a73" stroke-width="1.5" />
<polygon points="1209.1,760.9 1279.5,753.0 1277.3,767.7 1209.1,778.0" fill="#044f98" />
<polyline points="1209.1,778.0 1277.3,767.7 1279.5,753.0" fill="none" stroke="#1a84e0" stroke-width="1.6" />
<polygon points="1438.6,724.5 1461.4,718.9 1459.1,733.6 1440.9,742.7" fill="#1279d8" />
<polygon points="527.0,338.0 618.0,343.7 660.0,348.9 701.3,357.1 775.7,371.6 825.3,381.9 835.6,389.2 804.6,378.8 712.7,372.6 685.1,374.7 533.2,357.1 500.0,372.0" fill="#0a69c0" />
<polygon points="533.2,357.1 685.1,374.7 655.2,491.4 479.5,449.0" fill="#003f78" />
<polygon points="533.2,357.1 685.1,374.7 670.6,417.0 479.5,447.0" fill="#01213e" />
<polygon points="479.5,447.0 670.6,417.0 668.0,426.0 483.0,452.0" fill="#0557a4" />
<polygon points="566.0,434.6 613.8,419.0 614.8,438.8 571.4,448.0" fill="#0658a6" />
<polygon points="566.0,434.6 572.0,424.0 613.8,419.0" fill="#0a69c0" />
<polygon points="560.0,470.0 662.0,462.0 655.2,491.4 640.0,488.0" fill="#012a50" />
<polygon points="713.0,372.3 792.6,388.4 824.8,409.3 885.4,549.4 678.9,505.9" fill="#0a5cae" />
<polygon points="707.4,417.8 743.3,409.3 746.2,448.0 743.3,515.0 678.9,505.9 697.9,450.0" fill="#05519b" />
<polygon points="714.0,373.3 738.6,379.0 737.7,397.9 730.0,407.4 709.3,411.1" fill="#012a50" />
<polygon points="709.3,411.1 730.0,407.4 743.3,400.7 743.3,409.3 707.4,417.8" fill="#0a62b6" />
<polygon points="738.6,379.0 752.8,382.5 752.8,447.0 746.2,448.0 743.3,409.3 743.3,400.7 737.7,397.9" fill="#04509a" />
<polygon points="697.9,449.0 746.2,444.3 746.2,448.0 697.9,454.7" fill="#011f3b" />
<polygon points="766.1,413.0 792.6,402.6 822.9,411.1 840.0,439.6 777.4,426.3" fill="#0d6ac4" />
<polygon points="743.3,496.4 758.5,481.2 788.8,483.1 822.9,490.7 849.4,526.7 858.9,545.6 735.8,517.2" fill="#0e6ecb" />
<polygon points="758.5,481.2 785.0,473.7 841.9,484.1 822.9,492.6 788.8,484.1" fill="#03478c" />
<polygon points="840.0,439.6 867.5,508.0 885.4,549.4 858.9,545.6 849.4,526.7 841.9,484.1" fill="#0a60b4" />
<polygon points="795.3,392.3 804.6,393.3 821.2,408.8 802.6,405.7 796.4,399.5" fill="#cfe6dc" />
<polyline points="678.9,505.9 885.4,549.4" fill="none" stroke="#03386c" stroke-width="1" />
<polyline points="479.5,449.0 655.2,491.4" fill="none" stroke="#03386c" stroke-width="1" />
<polyline points="465.0,449.0 469.2,434.6 529.1,346.8 700.6,365.4" fill="none" stroke="#044a90" stroke-width="1" />
<polyline points="416.0,500.0 424.0,462.0 446.0,424.0 482.0,384.0 518.0,350.0" fill="none" stroke="#044a90" stroke-width="0.8" stroke-dasharray='7 3'/>
<polyline points="406.0,566.0 412.0,520.0 418.0,490.0" fill="none" stroke="#044a90" stroke-width="0.8" />
<polygon points="425.0,585.0 540.0,609.5 931.0,686.8 931.0,694.0 540.0,617.0 425.0,592.0" fill="#1278d6" opacity='0.8'/>
<polyline points="545.0,623.9 928.6,702.7" fill="none" stroke="#012e5a" stroke-width="1.6" />
<polygon points="545.0,623.9 928.6,702.7 933.0,756.0 565.0,672.0" fill="#04529e" opacity='0.45'/>
<polygon points="565.0,672.0 933.0,756.0 933.0,766.4 565.0,684.5" fill="#04509a" />
<polygon points="565.0,684.5 933.0,766.4 934.0,772.0 565.0,690.5" fill="#1278d6" />
<polygon points="565.0,690.5 934.0,772.0 935.5,780.0 565.0,698.2" fill="#04509a" />
<polyline points="655.2,491.4 646.0,530.0 641.0,568.0 640.0,625.0 646.8,670.9 650.0,700.0" fill="none" stroke="#044a90" stroke-width="1" />
<polyline points="921.6,553.5 914.0,575.0 910.5,698.0 917.3,757.0" fill="none" stroke="#033a74" stroke-width="1" />
<polyline points="667.0,548.0 694.0,552.0 693.0,566.0 668.0,562.0 667.0,548.0" fill="none" stroke="#044a90" stroke-width="1" />
<polygon points="382.5,570.5 397.3,566.0 425.0,575.0 425.7,634.0 425.7,658.0 415.5,656.8 399.5,645.5 399.5,631.8 389.3,618.2 383.6,588.6" fill="#0a63b8" />
<polygon points="382.5,570.5 397.3,566.0 425.0,575.0 412.0,580.0" fill="#1278d6" />
<polyline points="384.0,588.0 412.0,596.0" fill="none" stroke="#023a73" stroke-width="1.4" />
<polyline points="399.0,632.0 414.0,636.0" fill="none" stroke="#023a73" stroke-width="1.4" />
<path d="M428.0 585.0C429.3 570.3 434.5 567.7 440.0 562.0C445.5 556.3 452.2 552.0 461.0 551.0C469.8 550.0 481.2 550.8 492.7 556.0C504.2 561.2 519.5 568.0 530.0 582.0C540.5 596.0 550.7 622.0 556.0 640.0C561.3 658.0 571.3 680.0 562.0 690.0C552.7 700.0 521.7 706.7 500.0 700.0C478.3 693.3 444.0 669.2 432.0 650.0C420.0 630.8 426.7 599.7 428.0 585.0Z" fill="#024485" />
<polygon points="397.3,566.0 425.0,575.0 440.0,552.0 463.0,541.0 497.0,548.0 533.0,574.0 545.0,600.0 530.0,582.0 492.7,556.0 461.0,551.0 440.0,562.0 428.0,585.0" fill="#0f72cc" />
<path d="M931.0 780.0C915.8 769.8 929.0 751.5 929.0 739.0C929.0 726.5 929.0 716.3 931.0 705.0C933.0 693.7 936.5 679.0 941.0 671.0C945.5 663.0 950.8 661.5 958.0 657.0C965.2 652.5 973.5 645.2 984.0 644.0C994.5 642.8 1008.8 645.5 1021.0 650.0C1033.2 654.5 1047.0 663.5 1057.0 671.0C1067.0 678.5 1075.2 687.6 1081.0 695.0C1086.8 702.4 1089.2 701.5 1092.0 715.5C1094.8 729.5 1110.0 764.9 1098.0 779.0C1086.0 793.1 1047.8 799.8 1020.0 800.0C992.2 800.2 946.2 790.2 931.0 780.0Z" fill="#0f72cc" />
<path d="M937.7 780.0C923.6 769.8 935.5 751.1 935.5 739.0C935.5 726.9 935.8 717.9 937.7 707.3C939.6 696.7 942.8 682.9 946.8 675.5C950.8 668.1 955.5 667.3 961.8 663.2C968.1 659.1 975.0 651.8 984.5 650.7C994.0 649.6 1007.2 652.0 1018.6 656.4C1030.0 660.8 1043.2 669.6 1052.7 676.8C1062.2 684.0 1070.2 693.0 1075.5 699.5C1080.8 706.0 1080.8 702.2 1084.5 715.5C1088.2 728.8 1108.8 764.9 1098.0 779.0C1087.2 793.1 1046.7 799.8 1020.0 800.0C993.3 800.2 951.8 790.2 937.7 780.0Z" fill="#02478a" />
<g transform="rotate(-4 1017.5 762.6)">
<ellipse cx="1034.5" cy="775.6" rx="64.5" ry="83.7" fill="#1c1c1c"/>
<ellipse cx="1034.5" cy="763.6" rx="64.5" ry="92.7" fill="#1f1f1f"/>
<ellipse cx="1026.0" cy="763.6" rx="64.5" ry="93.7" fill="#292929"/>
<ellipse cx="1017.5" cy="762.6" rx="64.5" ry="93.7" fill="#3a3a3a"/>
<ellipse cx="1016.5" cy="761.6" rx="58.050000000000004" ry="86.20400000000001" fill="#424242"/>
<ellipse cx="1018.5" cy="762.6" rx="47.73" ry="71.212" fill="#3c3c3c"/>
<ellipse cx="1018.5" cy="766.5" rx="38.5" ry="57.5" fill="#2c2c2c"/>
<ellipse cx="1020.5" cy="766.5" rx="34.65" ry="52.900000000000006" fill="#363636"/>
<ellipse cx="1020.5" cy="765.5" rx="23.099999999999998" ry="35.65" fill="#2b2b2b"/>
<ellipse cx="1021.5" cy="765.5" rx="19.25" ry="29.900000000000002" fill="#3a3a3a"/>
<ellipse cx="1021.5" cy="763.5" rx="7.7" ry="10.35" fill="#2e2e2e"/>
</g>
<ellipse cx="1018.6" cy="725.7" rx="2.6" ry="3.2" fill="#1678d4"/>
<ellipse cx="1028.9" cy="728.6" rx="2.6" ry="3.2" fill="#1678d4"/>
<ellipse cx="1039.1" cy="735.9" rx="2.6" ry="3.2" fill="#1678d4"/>
<ellipse cx="1045.9" cy="747.3" rx="2.6" ry="3.2" fill="#1678d4"/>
<ellipse cx="1050.5" cy="762.0" rx="2.6" ry="3.2" fill="#1678d4"/>
<ellipse cx="1050.5" cy="776.8" rx="2.6" ry="3.2" fill="#1678d4"/>
<ellipse cx="1045.9" cy="789.3" rx="2.6" ry="3.2" fill="#1678d4"/>
<ellipse cx="1039.1" cy="796.8" rx="2.6" ry="3.2" fill="#1678d4"/>
<g transform="rotate(-7 489 648)">
<ellipse cx="506" cy="660" rx="54.5" ry="77.5" fill="#1c1c1c"/>
<ellipse cx="506" cy="649" rx="54.5" ry="85.5" fill="#1f1f1f"/>
<ellipse cx="497.5" cy="649" rx="54.5" ry="86.5" fill="#292929"/>
<ellipse cx="489" cy="648" rx="54.5" ry="86.5" fill="#3a3a3a"/>
<ellipse cx="488" cy="647" rx="49.050000000000004" ry="79.58" fill="#424242"/>
<ellipse cx="490" cy="648" rx="40.33" ry="65.74" fill="#3c3c3c"/>
<ellipse cx="491" cy="649" rx="31" ry="51" fill="#2c2c2c"/>
<ellipse cx="493" cy="649" rx="27.900000000000002" ry="46.92" fill="#363636"/>
<ellipse cx="493" cy="648" rx="18.599999999999998" ry="31.62" fill="#2b2b2b"/>
<ellipse cx="494" cy="648" rx="15.5" ry="26.52" fill="#3a3a3a"/>
<ellipse cx="494" cy="646" rx="6.2" ry="9.18" fill="#2e2e2e"/>
</g>
<ellipse cx="497.0" cy="616.0" rx="2.6" ry="3.2" fill="#1678d4"/>
<ellipse cx="505.0" cy="622.0" rx="2.6" ry="3.2" fill="#1678d4"/>
<ellipse cx="511.0" cy="633.0" rx="2.6" ry="3.2" fill="#1678d4"/>
<ellipse cx="515.0" cy="646.0" rx="2.6" ry="3.2" fill="#1678d4"/>
<ellipse cx="515.0" cy="660.0" rx="2.6" ry="3.2" fill="#1678d4"/>
<ellipse cx="512.0" cy="672.0" rx="2.6" ry="3.2" fill="#1678d4"/>
<ellipse cx="506.0" cy="680.0" rx="2.6" ry="3.2" fill="#1678d4"/>
<path d="M1209.7 459.1C1209.2 456.6 1215.0 456.1 1219.0 455.0C1223.0 453.9 1229.7 452.1 1233.5 452.3C1237.3 452.5 1239.6 453.0 1241.7 456.0C1243.8 459.0 1245.2 466.7 1245.9 470.5C1246.6 474.3 1246.9 476.4 1245.9 478.8C1244.9 481.2 1241.4 484.1 1239.7 485.0C1238.0 485.9 1238.5 486.5 1235.5 484.0C1232.5 481.5 1226.3 474.1 1222.0 470.0C1217.7 465.9 1210.2 461.6 1209.7 459.1Z" fill="#04427f" />
<polygon points="1209.7,459.1 1219.0,455.0 1233.5,452.3 1225.0,462.0 1218.0,466.0" fill="#0a69c0" />
<path d="M1188.5 167L1182.5 994" stroke="#25343a" stroke-opacity="0.55" stroke-width="1"/>
</svg>
<div class="abs" style="left:1854px;top:167px;width:74px;height:1px;background:#f0c2bd"></div>
<!-- left tools -->
<div id="tools">
  <div class="tb" style="left:28px;top:187px;width:48px;height:48px"><svg width="48" height="48" viewBox="0 0 48 48"><path d="M24 10.500L37.500 24.500V37.500H27.500V28H21.500V37.500H11V24.500z" fill="#fff"/></svg></div>
  <div class="tb" style="left:80px;top:187px;width:22px;height:22px"><svg width="22" height="22" viewBox="0 0 22 22"><path d="M7 11h8M11 7v8" stroke="#fff" stroke-width="2"/></svg></div>
  <div class="tb" style="left:80px;top:213px;width:22px;height:22px"><svg width="22" height="22" viewBox="0 0 22 22"><path d="M7 11h8" stroke="#fff" stroke-width="2"/></svg></div>
  <div class="tl" style="left:29px;top:242px">Home View</div>
  <div class="tb" style="left:28px;top:312px;width:40px;height:40px"><svg width="40" height="40" viewBox="0 0 40 40"><path d="M5 20Q20 3.500 35 20Q20 35.500 5 20z" fill="#fff"/><circle cx="20" cy="20" r="6.800" fill="#000"/><circle cx="20" cy="20" r="3.200" fill="#fff"/></svg></div>
  <div class="tl" style="left:29px;top:359px">View</div>
  <div class="tb" style="left:28px;top:385px;width:40px;height:40px"><svg width="40" height="40" viewBox="0 0 40 40"><path d="M20 6l5.500 6.500h-3.700v5.700h5.700v-3.700L34 20l-6.500 5.500v-3.700h-5.700v5.700h3.700L20 34l-5.500-6.500h3.700v-5.700h-5.700v3.700L6 20l6.500-5.500v3.700h5.700v-5.700h-3.700z" fill="#fff"/></svg></div>
  <div class="tl" style="left:29px;top:432px">Move</div>
  <div class="tb" style="left:28px;top:458px;width:40px;height:40px;background:#fa1e0e"><svg width="40" height="40" viewBox="0 0 40 40"><path d="M12.200 24.500A8.600 8.600 0 0 1 20 11.400" fill="none" stroke="#fff" stroke-width="3.600"/><path d="M27.800 15.500A8.600 8.600 0 0 1 20 28.600" fill="none" stroke="#fff" stroke-width="3.600"/><path d="M18.500 6l7 5.400-7 5.400z" fill="#fff"/><path d="M21.500 34l-7-5.400 7-5.400z" fill="#fff"/></svg></div>
  <div class="tl" style="left:30px;top:505px">Turn</div>
  <div class="tb" style="left:28px;top:531px;width:40px;height:40px"><svg width="40" height="40" viewBox="0 0 40 40"><path d="M9 16V9h22v22h-9" fill="none" stroke="#fff" stroke-width="2.600"/><rect x="8" y="20" width="12" height="12" fill="#fff"/></svg></div>
  <div class="tl" style="left:29px;top:578px">Scale</div>
  <div class="tb" style="left:28px;top:604px;width:40px;height:40px"><svg width="40" height="40" viewBox="0 0 40 40"><circle cx="20" cy="20" r="12" fill="#fff"/><rect x="18.300" y="18" width="3.400" height="9" fill="#000"/><circle cx="20" cy="13.600" r="2.100" fill="#000"/></svg></div>
  <div class="tl" style="left:29px;top:651px">Object</div>
</div>
<!-- status bar -->
<div id="statusbar" class="abs">
  <div class="abs" style="left:0;top:0;width:320px;height:54px;background:#000"></div>
  <div class="abs" style="left:320px;top:0;width:44px;height:54px;background:#fa1e0e"></div>
  <div class="abs" style="left:18px;top:15px;width:24px;height:24px;border-radius:12px;background:#fff;color:#000;font-size:10.500px;font-weight:bold;line-height:24px;text-align:center;letter-spacing:-0.6px">USB</div>
  <div class="abs" style="left:60px;top:15px;font-size:21px;letter-spacing:-0.5px;line-height:26px;color:#fff;white-space:nowrap">eeprom_err</div>
  <div class="abs" style="left:350px;top:16px;font-size:20px;line-height:24px;color:#fff;white-space:nowrap">Print 3%</div>
  <div class="abs" style="left:1809px;top:16px;font-size:20px;line-height:24px;color:#8a8a8a;white-space:nowrap">Monitor</div>
  <div class="abs" style="left:1884px;top:18px;width:18px;height:4px;background:#8a8a8a;box-shadow:0 7px 0 #8a8a8a,0 14px 0 #8a8a8a"></div>
</div>
<div id="rstrip" class="abs">
  <div class="abs" style="left:0;top:0;width:8px;height:20px;background:#b6b6b6"></div>
  <div class="abs" style="left:0;top:20px;width:8px;height:10px;background:#e6e6e6"></div>
  <div class="abs" style="left:0;top:30px;width:8px;height:18px;background:#f4f6f8"></div>
  <div class="abs" style="left:0;top:87px;width:8px;height:953px;background:#fdfdfd"></div>
  <div class="abs" style="left:4px;top:87px;width:1px;height:560px;background:#a2a2a2"></div>
  <div class="abs" style="left:4px;top:87px;width:4px;height:1px;background:#a2a2a2"></div>
  <div class="abs" style="left:6px;top:88px;width:2px;height:559px;background:#e4e4e4"></div>
  <div class="abs" style="left:0;top:270px;width:1px;height:380px;background:#c4c4c4"></div>
  <div class="abs" style="left:1px;top:905px;width:2px;height:28px;background:#b0b0b0"></div>
</div>
<div id="taskbar" class="abs">
  <div class="abs" style="left:52px;top:1px;width:58px;height:7px;background:#9db9d8"></div>
  <div class="abs" style="left:0;top:0;width:1928px;height:1px;background:#7d9cc0"></div>
  <div class="abs" style="left:136px;top:5px;width:15px;height:3px;background:#d9534a;border-radius:3px 3px 0 0"></div>
  <div class="abs" style="left:196px;top:5px;width:17px;height:3px;background:#6aa84f;border-radius:3px 3px 0 0"></div>
  <div class="abs" style="left:225px;top:1px;width:1px;height:7px;background:#9db9d8"></div>
  <div class="abs" style="left:322px;top:5px;width:16px;height:3px;background:#8a8f96;border-radius:3px 3px 0 0"></div>
  <div class="abs" style="left:379px;top:4px;width:14px;height:4px;background:#2f6fc0"></div>
  <div class="abs" style="left:437px;top:3px;width:16px;height:5px;background:#e8e000;border:1px solid #222"></div>
  <div class="abs" style="left:515px;top:5px;width:14px;height:3px;background:#d8dde6;border-radius:3px 3px 0 0"></div>
  <div class="abs" style="left:546px;top:1px;width:50px;height:7px;background:#9db9d8"></div>
  <div class="abs" style="left:563px;top:5px;width:16px;height:3px;background:#1e9ae0;border-radius:3px 3px 0 0"></div>
  <div class="abs" style="left:636px;top:5px;width:12px;height:3px;background:#4a7a3a"></div>
  <div class="abs" style="left:745px;top:4px;width:30px;height:4px;background:#e8201c;border-radius:3px 3px 0 0"></div>
  <div class="abs" style="left:806px;top:3px;width:34px;height:5px;background:#e6ecf2"></div>
  <div class="abs" style="left:1008px;top:4px;width:14px;height:4px;background:#2f6fc0"></div>
  <div class="abs" style="left:1052px;top:1px;width:58px;height:7px;background:#9db9d8"></div>
  <div class="abs" style="left:1113px;top:1px;width:58px;height:7px;background:#9db9d8"></div>
  <div class="abs" style="left:1175px;top:1px;width:58px;height:7px;background:#9db9d8"></div>
  <div class="abs" style="left:1190px;top:4px;width:28px;height:4px;background:#f4f6f8;border-radius:3px 3px 0 0"></div>
</div>
</body>
</html>
